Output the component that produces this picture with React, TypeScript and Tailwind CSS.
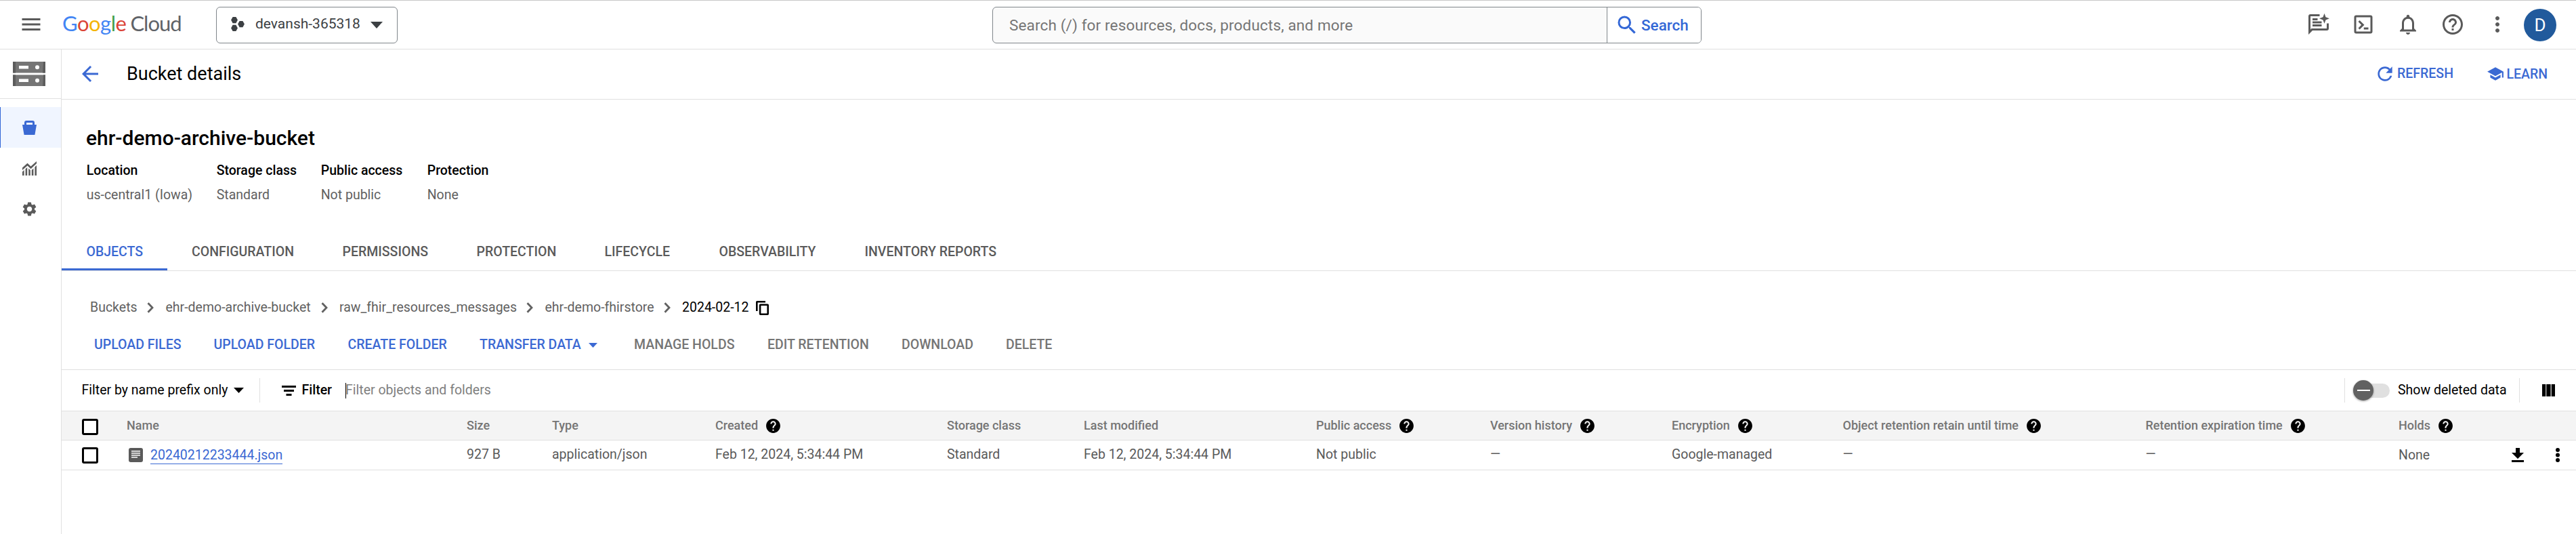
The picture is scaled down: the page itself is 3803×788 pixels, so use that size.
import React from "react";
import {
  MdMenu, MdSearch, MdNotificationsNone, MdHelpOutline, MdMoreVert, MdRefresh, MdSchool,
  MdArrowBack, MdHelp, MdSettings,
} from "react-icons/md";

function Caret({ className }: { className: string }) {
  return (
    <svg viewBox="0 0 10 5" preserveAspectRatio="none" className={className} fill="currentColor">
      <path d="M0 0h10L5 5z" />
    </svg>
  );
}

function Logo() {
  return (
    <div className="flex w-[227px] items-baseline pb-[6px] font-['Lato'] text-[31px] leading-[36px]">
      <span className="tracking-[-0.5px]">
        <span className="text-[#4285f4]">G</span>
        <span className="text-[#db4437]">o</span>
        <span className="text-[#f4b400]">o</span>
        <span className="text-[#4285f4]">g</span>
        <span className="text-[#43a047]">l</span>
        <span className="text-[#db4437]">e</span>
      </span>
      <span className="ml-[6px] tracking-[-1px] text-[#5f6368]">Cloud</span>
    </div>
  );
}

function Hexagons() {
  return (
    <svg viewBox="0 0 20 21" className="-mt-0.5 h-[21px] w-5 shrink-0" fill="#3c4043">
      <path d="M2.6 0h4.8L9.9 4.6 7.4 9.2H2.6L.1 4.6z" />
      <path d="M12.6 6h4.8l2.5 4.6-2.5 4.6h-4.8l-2.5-4.6z" />
      <path d="M2.6 11.8h4.8l2.5 4.6L7.4 21H2.6L.1 16.4z" />
    </svg>
  );
}

function TopBar() {
  return (
    <header className="flex h-[73px] items-center border-t border-b border-t-[#c8c8c8] border-b-[#e0e0e0] text-[#5a5a5a]">
      <MdMenu className="-mt-px ml-7 size-9 shrink-0" />
      <div className="ml-[28px]"><Logo /></div>
      <div className="flex h-[54px] w-[268px] shrink-0 items-center rounded-[6px] border border-[#80868b] pl-[21px]">
        <Hexagons />
        <span className="ml-4 w-[170px] pb-[3px] text-[21px] leading-[30px] text-[#3c4043]">devansh-365318</span>
        <Caret className="h-[10px] w-[18px] text-[#3c4043]" />
      </div>
      <div className="ml-[878px] flex h-[54px] w-[1047px] shrink-0 items-center overflow-hidden rounded-[6px] border border-[#80868b] bg-[#fafafa]">
        <span className="w-[906px] pl-6 text-[22.5px] leading-[30px] tracking-[0.14px] text-[#757575]">Search (/) for resources, docs, products, and more</span>
        <div className="flex h-full flex-1 items-center border-l border-[#80868b] bg-white pl-[11px] text-[#3367d6]">
          <MdSearch className="size-9" />
          <span className="ml-[3px] text-[22.5px] leading-[30px] font-medium">Search</span>
        </div>
      </div>
      <div className="ml-[893px] flex items-center">
        <svg viewBox="0 0 24 24" className="-mt-px size-9" fill="currentColor">
          <path d="M20 11v5H4.8L4 17.2V4h9V2H4a2 2 0 0 0-2 2v18l4-4h14a2 2 0 0 0 2-2v-5zM6 12h9v2H6zm0-3h9v2H6zm0-3h5v2H6z" />
          <path d="m17.7 10-1.400-3.600L12.700 5l3.600-1.300L17.700 0l1.300 3.700L22.600 5 19 6.400z" transform="translate(0 1.200)" />
        </svg>
        <svg viewBox="0 0 24 24" className="-mt-px ml-[30px] size-9" fill="currentColor">
          <path d="M19 3H5a2 2 0 0 0-2 2v14a2 2 0 0 0 2 2h14a2 2 0 0 0 2-2V5a2 2 0 0 0-2-2zm0 16H5V5h14zM12.500 15H17v2h-4.500zM7 9.400l1.400-1.400L13 12.500 8.400 17 7 15.600l3.100-3.100z" />
        </svg>
        <MdNotificationsNone className="-mt-px ml-[30px] size-9" />
        <MdHelpOutline className="-mt-px ml-[30px] size-9" />
        <MdMoreVert className="-mt-px ml-[30px] size-9" />
        <div className="ml-[21px] flex size-12 items-center justify-center rounded-full bg-[#215a9c] text-[26px] leading-none text-white">D</div>
      </div>
    </header>
  );
}

function Sidebar() {
  return (
    <aside className="flex w-[91px] shrink-0 flex-col border-r border-[#e0e0e0] text-[#5a5a5a]">
      <div className="flex h-[73px] items-center border-b border-[#e0e0e0] pl-[19px]">
        <svg viewBox="0 0 48 36" className="h-9 w-12">
          <path d="M0 0h48v16.500H0zM0 19.500h48V36H0z" fill="#757575" />
          <path d="M0 0h4v16.500H0zM0 19.500h4V36H0zM45 0h3v16.500h-4zM45 19.500h3V36h-4z" fill="#5c5c5c" />
          <path d="M9 6h14v4.500H9zM9 25.500h14V30H9z" fill="#fff" />
          <circle cx="36" cy="8.300" r="3" fill="#fff" />
          <circle cx="36" cy="27.800" r="3" fill="#fff" />
        </svg>
      </div>
      <div className="mt-3 flex h-[60px] items-center border-l border-[#3367d6] bg-[#f0f5ff] pl-8 text-[#3b69d3]">
        <svg viewBox="0 0 21 21" className="size-[21px]" fill="currentColor">
          <path fillRule="evenodd" d="M0 6h3V3a3 3 0 0 1 3-3h9a3 3 0 0 1 3 3v3h3l-2.600 15H2.600zM6 6h9V3H6z" />
        </svg>
      </div>
      <div className="flex h-[60px] items-center pl-[33px]">
        <svg viewBox="0 0 21 21" className="size-[21px]" fill="currentColor">
          <path d="M0 9.500 7.500 2.800l5 4.700L21 0v3.200l-8.500 8L7.500 6.500 0 13z" />
          <path d="M0 15.500 2.600 13v8H0zM4.600 11.300 7.200 9v12H4.600zM9.200 10.500l2.600 2.500v8H9.200zM13.800 13l2.600-2.500V21h-2.600zM18.400 8.500 21 6v15h-2.600z" />
        </svg>
      </div>
      <div className="flex h-[60px] items-center pl-[31px]">
        <MdSettings className="size-[25px]" />
      </div>
    </aside>
  );
}

function PageHeader() {
  return (
    <div className="flex h-[74px] items-center border-b border-[#e0e0e0] pb-px text-[#3b69d3]">
      <MdArrowBack className="ml-6 size-9" />
      <h1 className="ml-9 flex-1 text-[27px] leading-9 text-black">Bucket details</h1>
      <MdRefresh className="size-8" />
      <span className="ml-0.5 w-[131.5px] text-[19.5px] leading-[30px] font-medium">REFRESH</span>
      <MdSchool className="size-[26px]" />
      <span className="ml-1 w-[102.5px] pt-0.5 text-[19.5px] leading-[30px] font-medium">LEARN</span>
    </div>
  );
}

const facts = [
  { label: "Location", value: "us-central1 (Iowa)", width: "w-[192px]" },
  { label: "Storage class", value: "Standard", width: "w-[154px]" },
  { label: "Public access", value: "Not public", width: "w-[157px]" },
  { label: "Protection", value: "None", width: "w-[157px]" },
];

const tabs = [
  { label: "OBJECTS", width: "w-[155.5px]" },
  { label: "CONFIGURATION", width: "w-[222.5px]" },
  { label: "PERMISSIONS", width: "w-[198px]" },
  { label: "PROTECTION", width: "w-[189px]" },
  { label: "LIFECYCLE", width: "w-[169px]" },
  { label: "OBSERVABILITY", width: "w-[215px]" },
  { label: "INVENTORY REPORTS", width: "w-[270px]" },
];

function Summary() {
  return (
    <section className="border-b border-[#e0e0e0] pt-[39px]">
      <h2 className="ml-9 text-[30px] leading-9 font-medium">ehr-demo-archive-bucket</h2>
      <dl className="mt-[14.5px] ml-[36.7px] flex text-[19.5px] leading-[30px]">
        {facts.map((f) => (
          <div key={f.label} className={f.width}>
            <dt className="font-medium">{f.label}</dt>
            <dd className="mt-[6px] text-[#616161]">{f.value}</dd>
          </div>
        ))}
      </dl>
      <nav className="mt-[42.5px] flex text-[19.5px] font-medium text-[#5a5a5a]">
        {tabs.map((t, i) => (
          <a key={t.label} className={`flex h-[54px] items-center border-b-[3px] pt-[3px] pl-[36.5px] whitespace-nowrap ${t.width} ${i === 0 ? "border-[#3b69d3] text-[#3b69d3]" : "border-transparent"}`}>
            {t.label}
          </a>
        ))}
      </nav>
    </section>
  );
}

const crumbs = [
  { label: "Buckets", width: "w-[84px]" },
  { label: "ehr-demo-archive-bucket", width: "w-[229px]" },
  { label: "raw_fhir_resources_messages", width: "w-[276px]" },
  { label: "ehr-demo-fhirstore", width: "w-[175px]" },
];

const actions = [
  { label: "UPLOAD FILES", width: "w-[176.5px]", on: true },
  { label: "UPLOAD FOLDER", width: "w-[198px]", on: true },
  { label: "CREATE FOLDER", width: "w-[194.5px]", on: true },
  { label: "TRANSFER DATA", width: "w-[228px]", on: true, menu: true },
  { label: "MANAGE HOLDS", width: "w-[197px]", on: false },
  { label: "EDIT RETENTION", width: "w-[198px]", on: false },
  { label: "DOWNLOAD", width: "w-[154px]", on: false },
  { label: "DELETE", width: "w-[80px]", on: false },
];

function Browse() {
  return (
    <section className="h-[146px] border-b border-[#e0e0e0] pt-[39px]">
      <div className="ml-[42px] flex h-[30px] items-center text-[19.5px] leading-[30px] text-[#616161]">
        {crumbs.map((c) => (
          <React.Fragment key={c.label}>
            <span className={c.width}>{c.label}</span>
            <svg viewBox="0 0 10 16" className="mr-[17.5px] h-4 w-[10px]" fill="none" stroke="currentColor" strokeWidth="2.8">
              <path d="m1.500 1.200 6.500 6.800-6.500 6.800" />
            </svg>
          </React.Fragment>
        ))}
        <span className="w-[109px] text-black">2024-02-12</span>
        <svg viewBox="0 0 19 21" className="h-[21px] w-[19px]">
          <path fillRule="evenodd" d="M1.800 0H14v2.600H2.600V15H0V1.800A1.800 1.800 0 0 1 1.800 0zM6.600 4.500h10.600A1.800 1.800 0 0 1 19 6.300v12.900a1.800 1.800 0 0 1-1.800 1.800H6.600a1.800 1.800 0 0 1-1.800-1.800V6.300a1.800 1.800 0 0 1 1.800-1.800zM7.400 7.100v11.300h9V7.100z" />
        </svg>
      </div>
      <div className="mt-[25px] ml-[48px] flex h-[30px] items-center text-[19.5px] leading-[30px] font-medium">
        {actions.map((a) => (
          <span key={a.label} className={`flex items-center whitespace-nowrap ${a.width} ${a.on ? "text-[#3b69d3]" : "text-[#757575]"}`}>
            {a.label}
            {a.menu && <Caret className="ml-[11px] h-[7px] w-[13px]" />}
          </span>
        ))}
      </div>
    </section>
  );
}

function FilterBar() {
  return (
    <div className="flex h-[61px] items-center border-b border-[#e0e0e0] text-[19.5px] leading-[30px]">
      <span className="ml-[29.5px] w-[224.5px]">Filter by name prefix only</span>
      <Caret className="h-[8px] w-[15px]" />
      <div className="ml-[23px] h-9 w-px bg-[#e0e0e0]" />
      <svg viewBox="0 0 21 15" className="ml-[32px] h-[15px] w-[21px]"><path d="M0 0h21v3H0zM3 6h15v3H3zM6.500 12h8v3h-8z" /></svg>
      <span className="ml-[8.5px] w-[64.5px] font-medium">Filter</span>
      <div className="h-[23px] w-px bg-black" />
      <span className="-ml-px flex-1 text-[#808080]">Filter objects and folders</span>
      <div className="h-9 w-px bg-[#e0e0e0]" />
      <div className="ml-3 flex h-[30px] w-[54px] items-center">
        <div className="z-10 flex size-[30px] shrink-0 items-center justify-center rounded-full bg-[#616161] shadow-[0_1px_3px_rgba(0,0,0,0.4)]">
          <div className="h-[2px] w-[19px] bg-white" />
        </div>
        <div className="-ml-[15px] h-[21px] w-[39px] rounded-r-full bg-[#e0e0e0]" />
      </div>
      <span className="ml-3 w-[179px]">Show deleted data</span>
      <div className="h-9 w-px bg-[#e0e0e0]" />
      <svg viewBox="0 0 19 18" className="mr-[31px] ml-[33px] h-[18px] w-[19px]"><path d="M0 0h5.300v18H0zM6.300 0h6.300v18H6.300zM13.700 0H19v18h-5.300z" /></svg>
    </div>
  );
}

const GRID = "grid grid-cols-[66px_502px_126px_241px_342px_202px_343px_257px_268px_252.5px_447px_373.5px_167px_53px_1fr] items-center pl-[30px]";

const columns: [string, boolean][] = [
  ["Name", false], ["Size", false], ["Type", false], ["Created", true], ["Storage class", false],
  ["Last modified", false], ["Public access", true], ["Version history", true], ["Encryption", true],
  ["Object retention retain until time", true], ["Retention expiration time", true], ["Holds", true],
];

const cells = [
  "927 B", "application/json", "Feb 12, 2024, 5:34:44 PM", "Standard", "Feb 12, 2024, 5:34:44 PM",
  "Not public", "—", "Google-managed", "—", "—",
];

function ObjectTable() {
  return (
    <div>
      <div className={`${GRID} h-[43px] border-b border-[#e0e0e0] bg-[#f4f4f4] text-[18px] leading-[27px] font-medium text-[#757575]`}>
        <span className="mt-[3px] size-6 rounded-[3px] border-[3px] border-black bg-white" />
        {columns.map(([label, help]) => (
          <div key={label} className="flex items-center whitespace-nowrap">
            <span className="pb-px">{label}</span>
            {help && <MdHelp className="ml-[10px] size-[25px] text-black" />}
          </div>
        ))}
      </div>
      <div className={`${GRID} h-[44px] border-b border-[#e0e0e0] text-[19.5px] leading-[30px] text-[#5a5a5a]`}>
        <span className="size-6 rounded-[3px] border-[3px] border-black" />
        <div className="flex items-center">
          <svg viewBox="0 0 21 21" className="ml-[3px] size-[21px]">
            <rect width="21" height="21" rx="3" fill="#5a5a5a" />
            <path d="M4 4h13v1.500H4zM4 7h13v1.500H4zM4 10h13v1.500H4zM4 13h9v1.500H4z" fill="#fff" />
          </svg>
          <a className="ml-[11px] border-b border-[#3b69d3] leading-[25px] text-[#3b69d3]">20240212233444.json</a>
        </div>
        {cells.map((c, i) => <span key={i} className="pb-0.5 whitespace-nowrap">{c}</span>)}
        <span>None</span>
        <svg viewBox="0 0 18 21" className="h-[21px] w-[18px]"><path d="M6 0h6v7h6l-9 9-9-9h6zM0 18h18v3H0z" /></svg>
        <svg viewBox="0 0 6 21" className="ml-[11.5px] h-[21px] w-[6px]"><circle cx="3" cy="3" r="3" /><circle cx="3" cy="10.500" r="3" /><circle cx="3" cy="18" r="3" /></svg>
      </div>
    </div>
  );
}

export default function App() {
  return (
    <div className="flex h-[788px] w-full flex-col overflow-hidden bg-white font-['Roboto',sans-serif] text-black">
      <TopBar />
      <div className="flex flex-1">
        <Sidebar />
        <main className="min-w-0 flex-1">
          <PageHeader />
          <Summary />
          <Browse />
          <FilterBar />
          <ObjectTable />
        </main>
      </div>
    </div>
  );
}
